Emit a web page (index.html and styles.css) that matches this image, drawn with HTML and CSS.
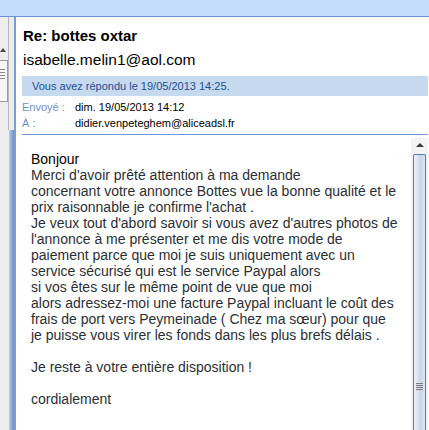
FILE: index.html
```html
<!DOCTYPE html>
<html lang="fr">
<head>
    <meta charset="UTF-8">
    <title>Re: bottes oxtar</title>
    <link rel="stylesheet" href="styles.css">
</head>
<body>
    <div class="topbar"></div>
    <div class="main">
        <div class="nav">
            <div class="nav-scroll">
                <div class="nav-arrow"></div>
                <div class="nav-thumb"><span></span><span></span><span></span><span></span></div>
            </div>
            <div class="nav-edge">
                <div class="edge-top"></div>
                <div class="edge-bottom"></div>
            </div>
        </div>
        <div class="pane">
            <div class="header">
                <h1 class="subject">Re: bottes oxtar</h1>
                <div class="sender">isabelle.melin1@aol.com</div>
                <div class="replied">Vous avez répondu le 19/05/2013 14:25.</div>
                <div class="meta">
                    <span class="label">Envoyé :</span>
                    <span class="value">dim. 19/05/2013 14:12</span>
                    <span class="label">À :</span>
                    <span class="value">didier.venpeteghem@aliceadsl.fr</span>
                </div>
            </div>
            <div class="body">
                <div class="message">
                    <p><span class="greet">Bonjour</span><br>
                    Merci d'avoir prêté attention à ma demande<br>
                    concernant votre annonce Bottes vue la bonne qualité et le prix raisonnable je confirme l'achat .<br>
                    Je veux tout d'abord savoir si vous avez d'autres photos de l'annonce à me présenter et me dis votre mode de paiement parce que moi je suis uniquement avec un service sécurisé qui est le service Paypal alors<br>
                    si vos êtes sur le même point de vue que moi<br>
                    alors adressez-moi une facture Paypal incluant le coût des frais de port vers Peymeinade ( Chez ma sœur) pour que je puisse vous virer les fonds dans les plus brefs délais .</p>
                    <p>Je reste à votre entière disposition !</p>
                    <p>cordialement</p>
                </div>
                <div class="vscroll">
                    <div class="up"></div>
                    <div class="thumb">
                        <div class="grip"><span></span><span></span><span></span><span></span></div>
                    </div>
                </div>
            </div>
        </div>
    </div>
</body>
</html>
```

FILE: styles.css
```css
html, body {
    margin: 0;
    height: 430px;
    overflow: hidden;
    background: #fff;
    font-family: "Liberation Sans", Arial, sans-serif;
}

.topbar {
    height: 16px;
    background: #c4dcfa;
    border-bottom: 1px solid #6c92d0;
}

.main {
    display: flex;
    height: 413px;
}

/* folder list on the left, only its edge shows */
.nav {
    width: 14px;
    display: flex;
    background: #ededed;
}

.nav-scroll {
    width: 8px;
    border-right: 1px solid #b4b4b4;
    height: 113px;
}

.nav-arrow {
    margin: 31px 0 0 0;
    width: 0;
    height: 0;
    border-left: 3px solid transparent;
    border-right: 3px solid transparent;
    border-bottom: 4px solid #4a4a4a;
}

.nav-thumb {
    margin-top: 8px;
    height: 42px;
    border: 1px solid #9a9a9a;
    border-left: none;
    background: #f7f7f7;
    display: flex;
    flex-direction: column;
    gap: 2px;
    padding-top: 8px;
    box-sizing: border-box;
}

.nav-thumb span {
    display: block;
    height: 1px;
    margin-right: 2px;
    background: #8a8a8a;
}

.nav-edge {
    width: 5px;
    display: flex;
    flex-direction: column;
}

.edge-top {
    height: 113px;
}

.edge-bottom {
    flex: 1;
    background: linear-gradient(to right, #b9cbe8, #6d91cb);
}

.pane {
    flex: 1;
    border-left: 2px solid #7a9dd8;
    display: flex;
    flex-direction: column;
    padding-right: 1px;
}

.header {
    padding-left: 6px;
}

.subject {
    margin: 10px 0 0 1px;
    font-size: 15px;
    font-weight: bold;
    line-height: 18px;
    color: #000;
}

.sender {
    margin: 6px 0 0 1px;
    font-size: 15.5px;
    line-height: 18px;
    color: #000;
}

.replied {
    margin-top: 7px;
    height: 20px;
    line-height: 20px;
    padding-left: 10px;
    background: #c5d9ef;
    color: #244f96;
    font-size: 11px;
}

.meta {
    display: grid;
    grid-template-columns: 53px auto;
    row-gap: 2px;
    padding: 4px 0 4px 0;
    border-bottom: 1px solid #6f9ad8;
    font-size: 11px;
    line-height: 14px;
}

.label {
    color: #6b8fc9;
}

.value {
    color: #000;
}

.body {
    flex: 1;
    display: flex;
    min-height: 0;
}

.message {
    flex: 1;
    padding: 16px 13px 0 15px;
    font-size: 14px;
    line-height: 16px;
    color: #2a2f36;
}

.message p {
    margin: 0 0 16px 0;
}

.greet {
    color: #000;
}

.vscroll {
    width: 17px;
    margin-top: 3px;
    background: #f3f3f3;
    display: flex;
    flex-direction: column;
    align-items: center;
}

.up {
    margin-top: 5px;
    width: 0;
    height: 0;
    border-left: 4px solid transparent;
    border-right: 4px solid transparent;
    border-bottom: 4px solid #3c3c3c;
}

.thumb {
    margin-top: 7px;
    width: 13px;
    flex: 1;
    border: 1px solid #5b79ad;
    border-bottom: none;
    border-radius: 2px 2px 0 0;
    background: linear-gradient(to right, #eef2f8, #c9d6ea 60%, #dbe4f2);
    box-sizing: border-box;
    padding-top: 228px;
}

.grip {
    display: flex;
    flex-direction: column;
    gap: 1px;
    align-items: center;
}

.grip span {
    display: block;
    width: 7px;
    height: 1px;
    background: #7b7b7b;
}
```
